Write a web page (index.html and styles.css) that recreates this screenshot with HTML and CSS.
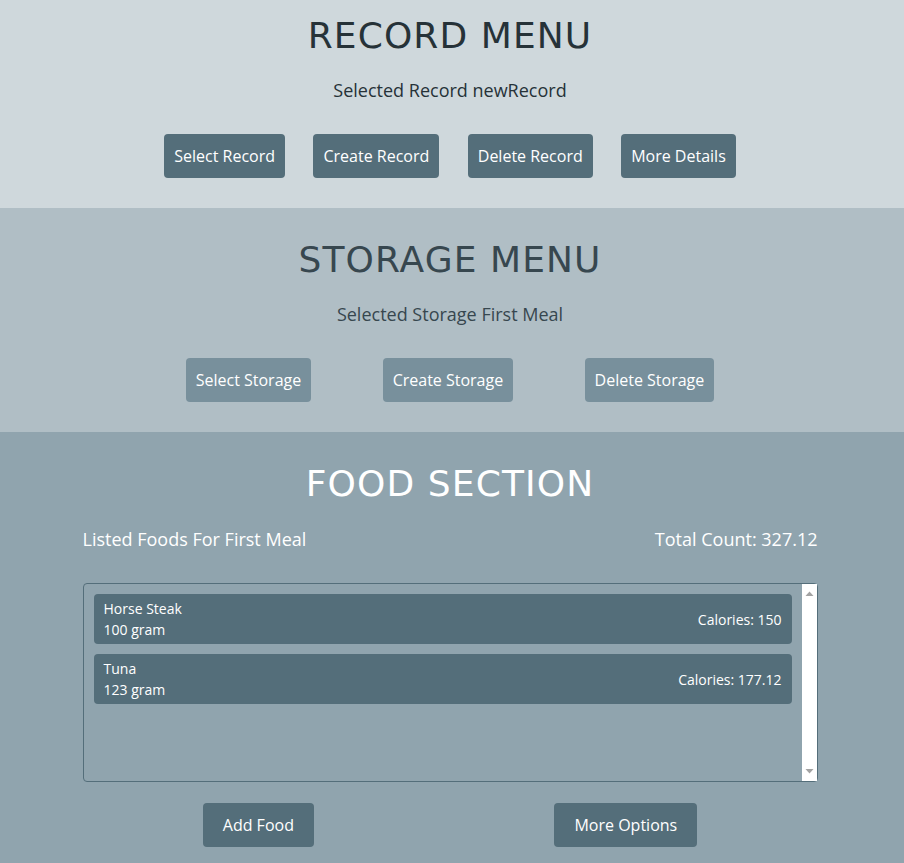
FILE: index.html
```html
<!DOCTYPE html>
<html>
<head>
<meta charset="utf-8">
<link rel="stylesheet" href="styles.css">
</head>
<body>
<section class="panel panel-record">
  <h1 class="panel-title">RECORD MENU</h1>
  <p class="panel-sub">Selected Record newRecord</p>
  <div class="btn-row">
    <button class="btn btn-dark">Select Record</button>
    <button class="btn btn-dark">Create Record</button>
    <button class="btn btn-dark">Delete Record</button>
    <button class="btn btn-dark">More Details</button>
  </div>
</section>
<section class="panel panel-storage">
  <h1 class="panel-title">STORAGE MENU</h1>
  <p class="panel-sub">Selected Storage First Meal</p>
  <div class="btn-row">
    <button class="btn btn-light">Select Storage</button>
    <button class="btn btn-light">Create Storage</button>
    <button class="btn btn-light">Delete Storage</button>
  </div>
</section>
<section class="panel panel-food">
  <h1 class="panel-title">FOOD SECTION</h1>
  <div class="food-wrap">
    <div class="food-head">
      <span>Listed Foods For First Meal</span>
      <span>Total Count: 327.12</span>
    </div>
    <div class="food-list">
      <div class="food-items">
        <div class="food-item">
          <div class="food-info">
            <div>Horse Steak</div>
            <div>100 gram</div>
          </div>
          <div class="food-cal">Calories: 150</div>
        </div>
        <div class="food-item">
          <div class="food-info">
            <div>Tuna</div>
            <div>123 gram</div>
          </div>
          <div class="food-cal">Calories: 177.12</div>
        </div>
      </div>
      <div class="scrollbar">
        <svg class="arrow" width="15" height="15" viewBox="0 0 15 15"><path d="M3.5 10 L7.5 5.5 L11.5 10 Z" fill="#a3a3a3"/></svg>
        <svg class="arrow" width="15" height="15" viewBox="0 0 15 15"><path d="M3.5 5 L7.5 9.5 L11.5 5 Z" fill="#a3a3a3"/></svg>
      </div>
    </div>
    <div class="food-actions">
      <button class="btn btn-dark btn-wide">Add Food</button>
      <button class="btn btn-dark btn-wide">More Options</button>
    </div>
  </div>
</section>
</body>
</html>
```
FILE: styles.css
```css
html, body {
  margin: 0;
  padding: 0;
}
body {
  font-family: "Open Sans", "Liberation Sans", sans-serif;
  background: #90a4ae;
}
.panel {
  text-align: center;
  padding: 14px 4px 30px 0;
}
.panel-record {
  background: #cfd8dc;
  color: #263238;
}
.panel-storage {
  background: #b0bec5;
  color: #37474f;
  padding-top: 30px;
}
.panel-food {
  background: #90a4ae;
  color: #ffffff;
  padding-top: 30px;
  padding-bottom: 16px;
}
.panel-title {
  font-family: "DejaVu Sans", sans-serif;
  font-weight: normal;
  font-size: 36px;
  line-height: 44px;
  letter-spacing: 1.1px;
  margin: 0;
}
.panel-sub {
  font-size: 18px;
  line-height: 24px;
  margin: 20px 0 0;
}
.btn-row {
  width: 600px;
  margin: 32px auto 0;
  display: flex;
  justify-content: space-around;
}
.btn {
  font-family: "Open Sans", "Liberation Sans", sans-serif;
  font-size: 16px;
  height: 44px;
  padding: 0 10px;
  border: none;
  border-radius: 4px;
  color: #ffffff;
}
.btn-dark {
  background: #546e7a;
}
.btn-light {
  background: #78909c;
}
.btn-wide {
  padding: 0 20px;
}
.food-wrap {
  width: 735px;
  margin: 0 auto;
}
.food-head {
  display: flex;
  justify-content: space-between;
  font-size: 18px;
  line-height: 24px;
  margin-top: 21px;
}
.food-list {
  margin-top: 32px;
  height: 197px;
  border: 1px solid #546e7a;
  border-radius: 4px;
  display: flex;
  text-align: left;
}
.food-items {
  flex: 1;
  padding: 10px;
  display: flex;
  flex-direction: column;
  gap: 10px;
}
.food-item {
  background: #546e7a;
  border-radius: 4px;
  padding: 4px 10px 4px;
  display: flex;
  justify-content: space-between;
  align-items: center;
  font-size: 14px;
  line-height: 21px;
}
.scrollbar {
  width: 15px;
  background: #ffffff;
  display: flex;
  flex-direction: column;
  justify-content: space-between;
  padding: 2px 0;
}
.arrow {
  display: block;
}
.food-actions {
  display: flex;
  justify-content: space-around;
  margin-top: 21px;
}
```
